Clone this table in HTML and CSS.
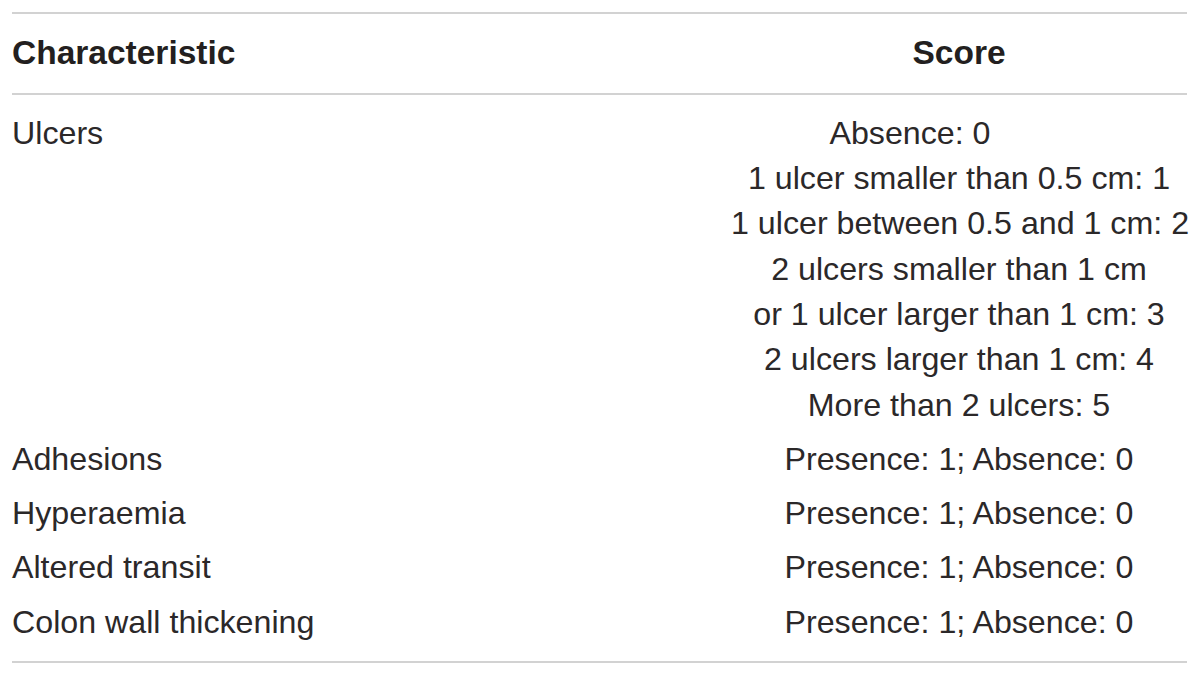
FILE: index.html
```html
<!DOCTYPE html>
<html lang="en">
<head>
  <meta charset="UTF-8" />
  <meta name="viewport" content="width=device-width, initial-scale=1.0"/>
  <title>Scoring table</title>
  <link rel="stylesheet" href="styles.css">
</head>
<body>

<table class="score-table">
  <thead>
    <tr>
      <th class="col-char">Characteristic</th>
      <th class="col-score">Score</th>
    </tr>
  </thead>
  <tbody>
    <tr class="first">
      <td>Ulcers</td>
      <td class="score">
        <div class="shift">Absence: 0</div>
        <div>1 ulcer smaller than 0.5 cm: 1</div>
        <div>1 ulcer between 0.5 and 1 cm: 2</div>
        <div>2 ulcers smaller than 1 cm</div>
        <div>or 1 ulcer larger than 1 cm: 3</div>
        <div>2 ulcers larger than 1 cm: 4</div>
        <div>More than 2 ulcers: 5</div>
      </td>
    </tr>
    <tr>
      <td>Adhesions</td>
      <td class="score">Presence: 1; Absence: 0</td>
    </tr>
    <tr>
      <td>Hyperaemia</td>
      <td class="score">Presence: 1; Absence: 0</td>
    </tr>
    <tr>
      <td>Altered transit</td>
      <td class="score">Presence: 1; Absence: 0</td>
    </tr>
    <tr class="last">
      <td>Colon wall thickening</td>
      <td class="score">Presence: 1; Absence: 0</td>
    </tr>
  </tbody>
</table>

</body>
</html>
```

FILE: styles.css
```css
body {
  margin: 0;
  padding: 12px 0 0 12px;
  background: #fff;
  color: #2b2829;
  font-family: "Liberation Sans", Arial, sans-serif;
}

.score-table {
  width: 1175px;
  table-layout: fixed;
  border-collapse: collapse;
  border-top: 2px solid #d2d2d2;
  border-bottom: 2px solid #d2d2d2;
  font-size: 32.2px;
  line-height: 45.3px;
}

.score-table th {
  padding: 15.5px 0 18.5px;
  font-size: 33.5px;
  font-weight: bold;
  color: #231f20;
  border-bottom: 2px solid #d2d2d2;
}

.col-char {
  width: 719px;
  text-align: left;
}

.col-score {
  text-align: center;
}

.score-table td {
  padding: 4.5px 0;
  vertical-align: top;
  text-align: left;
  white-space: nowrap;
}

.score-table td.score {
  text-align: center;
}

.score-table tr.first td {
  padding-top: 15.5px;
}

.score-table tr.last td {
  padding-bottom: 16px;
}

.shift {
  padding-right: 98px;
}
```
